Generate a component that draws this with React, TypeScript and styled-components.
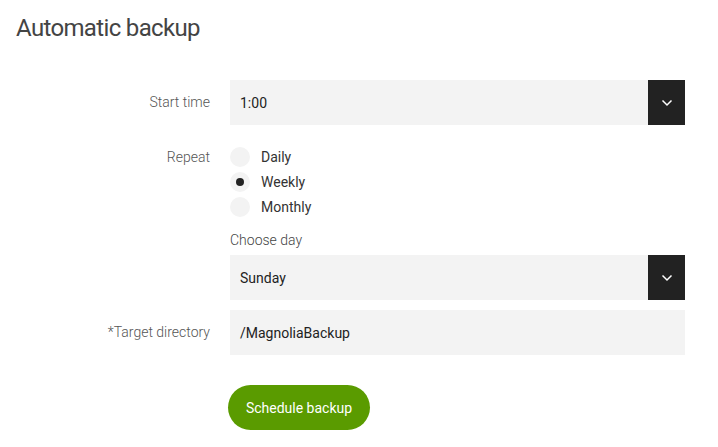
import React from "react";
import styled, { createGlobalStyle } from "styled-components";

const Global = createGlobalStyle`
  html, body { margin: 0; padding: 0; background: #fff; }
  body { font-family: Roboto, "Liberation Sans", Arial, sans-serif; }
`;

const Page = styled.div`
  padding: 14px 33px 0 16px;
`;

const Title = styled.h1`
  margin: 0 0 38px 0;
  font-size: 24px;
  font-weight: 400;
  color: #444;
  line-height: 28px;
  letter-spacing: -0.65px;
`;

const Form = styled.div`
  display: grid;
  grid-template-columns: 194px 1fr;
  column-gap: 20px;
`;

const Label = styled.div<{ $top: number }>`
  text-align: right;
  font-size: 14px;
  font-weight: 300;
  color: #555;
  padding-top: ${(p) => p.$top}px;
  line-height: 16px;
`;

const Field = styled.div<{ $mb: number }>`
  margin-bottom: ${(p) => p.$mb}px;
`;

const SelectBox = styled.div`
  display: flex;
  height: 45px;
  background: #f3f3f3;
  align-items: stretch;
`;

const SelectValue = styled.div`
  flex: 1;
  display: flex;
  align-items: center;
  padding-left: 10px;
  font-size: 14px;
  color: #222;
`;

const SelectButton = styled.div`
  width: 37px;
  background: #222;
  display: flex;
  align-items: center;
  justify-content: center;
`;

const Input = styled.div`
  height: 45px;
  background: #f3f3f3;
  display: flex;
  align-items: center;
  padding-left: 10px;
  font-size: 14px;
  color: #222;
`;

const RadioList = styled.div`
  display: flex;
  flex-direction: column;
  gap: 5px;
`;

const RadioRow = styled.div`
  display: flex;
  align-items: center;
  gap: 11px;
  height: 20px;
`;

const RadioCircle = styled.span<{ $on?: boolean }>`
  width: 20px;
  height: 20px;
  border-radius: 50%;
  background: #f3f3f3;
  display: flex;
  align-items: center;
  justify-content: center;
  &::after {
    content: "";
    width: 8px;
    height: 8px;
    border-radius: 50%;
    background: ${(p) => (p.$on ? "#222" : "transparent")};
  }
`;

const RadioText = styled.span`
  font-size: 14px;
  color: #333;
`;

const SubLabel = styled.div`
  font-size: 14px;
  font-weight: 300;
  color: #444;
  margin: 15px 0 7px 0;
  line-height: 16px;
`;

const Button = styled.button`
  height: 45px;
  width: 142px;
  margin-left: -2px;
  border: none;
  border-radius: 23px;
  background: #5a9b00;
  color: #fff;
  font-family: inherit;
  font-size: 14px;
  font-weight: 400;
  cursor: pointer;
`;

const Chevron = () => (
  <svg width="12" height="8" viewBox="0 0 12 8">
    <path d="M1.5 1.5 L6 6 L10.5 1.5" fill="none" stroke="#fff" strokeWidth="1.5" />
  </svg>
);

const Select = ({ value }: { value: string }) => (
  <SelectBox>
    <SelectValue>{value}</SelectValue>
    <SelectButton>
      <Chevron />
    </SelectButton>
  </SelectBox>
);

export default function App() {
  return (
    <Page>
      <Global />
      <Title>Automatic backup</Title>
      <Form>
        <Label $top={14}>Start time</Label>
        <Field $mb={22}>
          <Select value="1:00" />
        </Field>

        <Label $top={2}>Repeat</Label>
        <Field $mb={10}>
          <RadioList>
            <RadioRow>
              <RadioCircle />
              <RadioText>Daily</RadioText>
            </RadioRow>
            <RadioRow>
              <RadioCircle $on />
              <RadioText>Weekly</RadioText>
            </RadioRow>
            <RadioRow>
              <RadioCircle />
              <RadioText>Monthly</RadioText>
            </RadioRow>
          </RadioList>
          <SubLabel>Choose day</SubLabel>
          <Select value="Sunday" />
        </Field>

        <Label $top={14}>*Target directory</Label>
        <Field $mb={30}>
          <Input>/MagnoliaBackup</Input>
        </Field>

        <div />
        <Field $mb={0}>
          <Button>Schedule backup</Button>
        </Field>
      </Form>
    </Page>
  );
}
